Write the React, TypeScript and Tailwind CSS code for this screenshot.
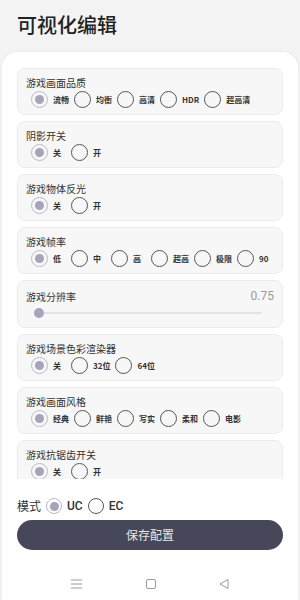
import React from 'react';

type Group = { title: string; options: string[]; selected: number };

const groupsTop: Group[] = [
  { title: '游戏画面品质', options: ['流畅', '均衡', '高清', 'HDR', '超高清'], selected: 0 },
  { title: '阴影开关', options: ['关', '开'], selected: 0 },
  { title: '游戏物体反光', options: ['关', '开'], selected: 0 },
  { title: '游戏帧率', options: ['低', '中', '高', '超高', '极限', '90'], selected: 0 },
];

const groupsBottom: Group[] = [
  { title: '游戏场景色彩渲染器', options: ['关', '32位', '64位'], selected: 0 },
  { title: '游戏画面风格', options: ['经典', '鲜艳', '写实', '柔和', '电影'], selected: 0 },
  { title: '游戏抗锯齿开关', options: ['关', '开'], selected: 0 },
];

const Radio: React.FC<{ checked: boolean; big?: boolean }> = ({ checked, big }) => {
  const size = big ? 'h-[16px] w-[16px]' : 'h-[17px] w-[17px]';
  if (checked) {
    return (
      <span className={`${size} flex shrink-0 items-center justify-center rounded-full border-[1.5px] border-[#b9b9ca]`}>
        <span className="h-[9px] w-[9px] rounded-full bg-[#a5a5ba]" />
      </span>
    );
  }
  return <span className={`${size} shrink-0 rounded-full border-[1.5px] border-[#555]`} />;
};

const RadioCard: React.FC<{ group: Group }> = ({ group }) => (
  <div className="shrink-0 rounded-lg border border-[#ececec] bg-[#f7f7f7] px-[8px] pt-[7px] pb-[6px]">
    <div className="text-[10px] leading-[13px] text-[#333]">{group.title}</div>
    <div className="mt-[2px] flex h-[17px] items-center whitespace-nowrap pl-[5px]">
      {group.options.map((opt, i) => (
        <div key={opt} className="flex shrink-0 items-center">
          <Radio checked={i === group.selected} />
          <span className="ml-[5px] mr-[5px] min-w-[13px] text-[8px] font-bold leading-none text-[#333]">{opt}</span>
        </div>
      ))}
    </div>
  </div>
);

const SliderCard: React.FC = () => (
  <div className="shrink-0 rounded-lg border border-[#ececec] bg-[#f7f7f7] px-[8px] pt-[9px] pb-[7px]">
    <div className="flex items-center justify-between">
      <span className="text-[10px] leading-[13px] text-[#333]">游戏分辨率</span>
      <span className="font-['Roboto'] text-[12px] leading-[13px] text-[#9a9a9a]">0.75</span>
    </div>
    <div className="mt-[3px] flex h-[14px] items-center pl-[8px] pr-[12px]">
      <span className="h-[10px] w-[10px] shrink-0 rounded-full bg-[#a5a5bd]" />
      <span className="h-[2px] flex-1 rounded-full bg-[#e2e2e2]" />
    </div>
  </div>
);

export default function App() {
  return (
    <div className="flex h-[600px] w-[300px] flex-col overflow-hidden bg-[#f3f3f3] font-['Noto_Sans_CJK_SC',sans-serif]">
      <div className="h-[52px] shrink-0 pl-[17px] pt-[11px] text-[20px] font-medium leading-[28px] text-[#222]">
        可视化编辑
      </div>
      <div className="mx-[2px] flex flex-1 flex-col rounded-t-[16px] bg-white px-[15px] pt-[16px] shadow-[0_0_3px_rgba(0,0,0,0.06)]">
        <div className="flex h-[411px] shrink-0 flex-col gap-[6px] overflow-hidden">
          {groupsTop.map(g => (
            <RadioCard key={g.title} group={g} />
          ))}
          <SliderCard />
          {groupsBottom.map(g => (
            <RadioCard key={g.title} group={g} />
          ))}
        </div>
        <div className="mt-[17px] flex h-[20px] items-center text-[12px] text-[#333]">
          <span className="mr-[5px]">模式</span>
          <Radio checked big />
          <span className="ml-[5px] mr-[5px] font-['Roboto'] font-medium">UC</span>
          <Radio checked={false} big />
          <span className="ml-[5px] font-['Roboto'] font-medium">EC</span>
        </div>
        <button className="mt-[4px] h-[30px] w-full rounded-full bg-[#464759] text-[12px] text-[#e6e6e6]">
          保存配置
        </button>
        <div className="mt-[28px] flex items-center justify-between px-[53px]">
          <svg width="13" height="12" viewBox="0 0 13 12" fill="none" stroke="#9a9a9a" strokeWidth="1">
            <path d="M1 2h11M1 6h11M1 10h11" />
          </svg>
          <svg width="12" height="12" viewBox="0 0 12 12" fill="none" stroke="#9a9a9a" strokeWidth="1">
            <rect x="1.5" y="1.5" width="9" height="9" rx="1.5" />
          </svg>
          <svg width="12" height="12" viewBox="0 0 12 12" fill="none" stroke="#9a9a9a" strokeWidth="1">
            <path d="M10 1.5L2 6l8 4.5z" strokeLinejoin="round" />
          </svg>
        </div>
      </div>
    </div>
  );
}
